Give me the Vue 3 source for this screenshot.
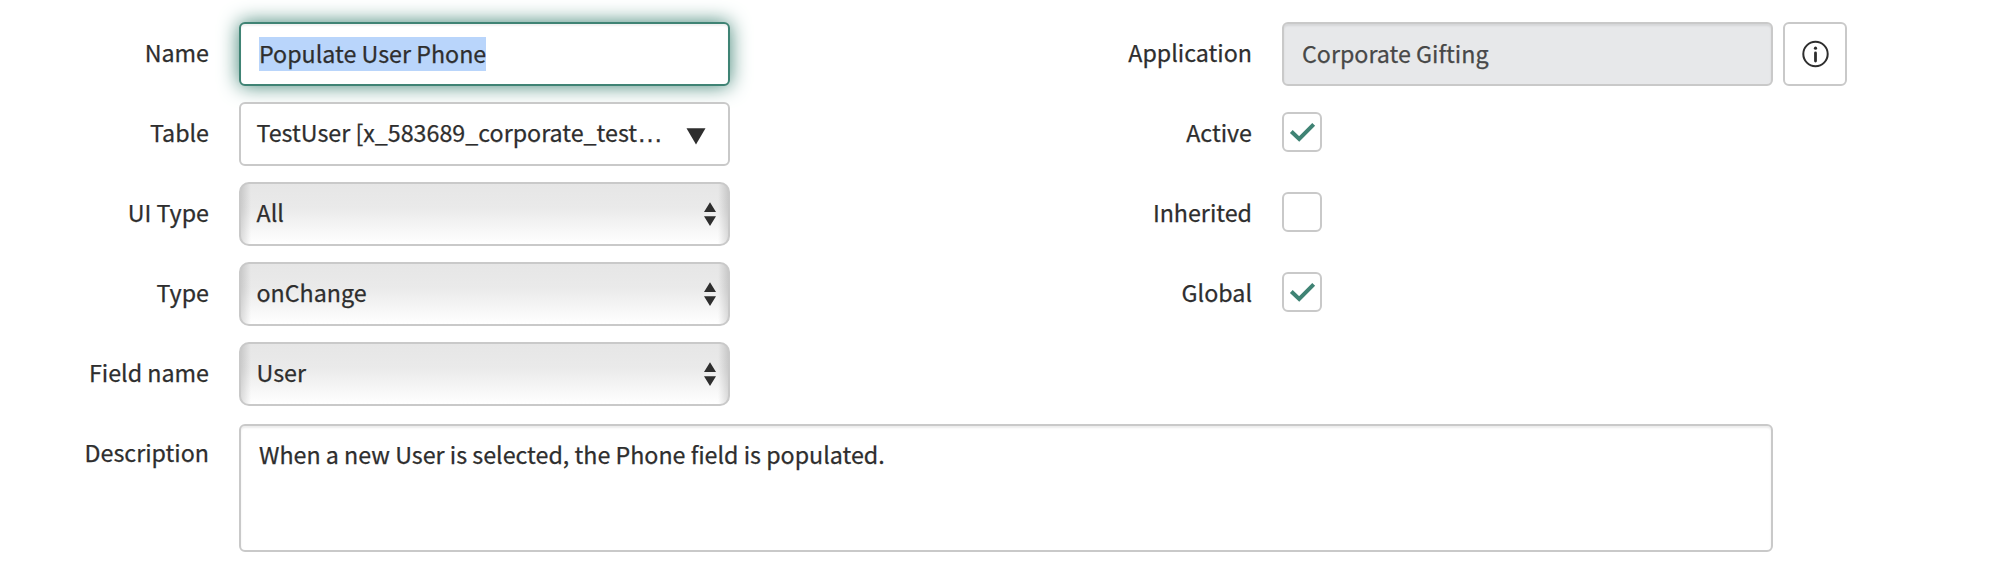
<script setup>
const selects = [
  { label: 'UI Type', value: 'All' },
  { label: 'Type', value: 'onChange' },
  { label: 'Field name', value: 'User' },
]
const checks = [
  { label: 'Active', on: true },
  { label: 'Inherited', on: false },
  { label: 'Global', on: true },
]
</script>

<template>
  <main class="form">
    <div class="columns">
      <section class="column left">
        <div class="row">
          <label class="label">Name</label>
          <div class="control focused"><span class="selected">Populate User Phone</span></div>
        </div>
        <div class="row">
          <label class="label">Table</label>
          <div class="control picker">
            <span>TestUser [x_583689_corporate_test<span class="dots">…</span></span>
            <svg class="caret" width="20" height="17" viewBox="0 0 20 17"><path d="M0.5 0.3H19.5L10 16.6Z" fill="#2e2e2e" /></svg>
          </div>
        </div>
        <div v-for="s in selects" :key="s.label" class="row">
          <label class="label">{{ s.label }}</label>
          <div class="control select">
            <span>{{ s.value }}</span>
            <svg width="12" height="24" viewBox="0 0 12 24"><path d="M0 10L6 0.3L12 10ZM0 14.2H12L6 24Z" fill="#2e2e2e" /></svg>
          </div>
        </div>
      </section>
      <section class="column right">
        <div class="row">
          <label class="label">Application</label>
          <div class="control readonly"><span>Corporate Gifting</span></div>
          <button class="info" type="button" aria-label="Information">
            <svg width="28" height="28" viewBox="0 0 28 28">
              <circle cx="14.5" cy="14" r="12.2" fill="none" stroke="#2e2e2e" stroke-width="2" />
              <circle cx="14.5" cy="8.2" r="1.6" fill="#2e2e2e" />
              <path d="M14.5 13V21" stroke="#2e2e2e" stroke-width="2.8" stroke-linecap="round" />
            </svg>
          </button>
        </div>
        <div v-for="c in checks" :key="c.label" class="row">
          <label class="label">{{ c.label }}</label>
          <div class="check">
            <svg v-if="c.on" width="36" height="36" viewBox="2 2 36 36"><path d="M9.3 19.5L17.2 27L31.7 12.3" fill="none" stroke="#3f8374" stroke-width="4" /></svg>
          </div>
        </div>
      </section>
    </div>
    <div class="row description">
      <label class="label">Description</label>
      <div class="control area">When a new User is selected, the Phone field is populated.</div>
    </div>
  </main>
</template>

<style>
body { margin: 0; background: #fff; }
</style>

<style scoped>
.form {
  box-sizing: border-box;
  width: 1998px;
  height: 566px;
  padding-top: 22px;
  font-family: "Noto Sans CJK SC", "Noto Sans", sans-serif;
  font-size: 23.25px;
  color: #2e2e2e;
  -webkit-text-stroke: 0.25px currentColor;
  overflow: hidden;
}
.columns { display: flex; }
.column { display: flex; flex-direction: column; gap: 16px; }
.left { width: 730px; }
.row { display: flex; height: 64px; }
.label {
  box-sizing: border-box;
  width: 239px;
  padding-right: 30px;
  text-align: right;
  line-height: 60px;
  white-space: nowrap;
  flex: none;
}
.right .label { width: 552px; }
.control {
  box-sizing: border-box;
  display: flex;
  width: 491px;
  height: 64px;
  border: 2px solid #c9c9c9;
  border-radius: 6px;
  background: #fff;
  line-height: 56px;
  white-space: nowrap;
  flex: none;
}
.focused {
  align-items: flex-start;
  padding: 13px 0 0 18px;
  border-color: #3f8374;
  box-shadow: inset 0 2px 2px rgba(0, 0, 0, 0.06), 0 0 20px rgba(63, 131, 116, 0.98);
}
.selected { height: 34px; line-height: 32px; background: #b9d5fb; }
.picker { justify-content: space-between; padding: 0 22px 0 15.5px; }
.dots { font-family: "Liberation Sans", sans-serif; font-size: 26px; line-height: 1; }
.caret { margin-top: 24px; }
.select {
  justify-content: space-between;
  padding: 0 12px 0 15.5px;
  border-radius: 10px;
  background:
    linear-gradient(to right, rgba(0, 0, 0, 0.13), rgba(0, 0, 0, 0) 10px, rgba(0, 0, 0, 0) calc(100% - 10px), rgba(0, 0, 0, 0.13)),
    linear-gradient(#e6e6e6, #eaeaea 40%, #fff);
}
.select svg { margin-top: 18px; }
.readonly {
  padding-left: 18px;
  background: #e7e8ea;
  color: #484848;
  line-height: 58px;
  box-shadow: inset 0 2px 2px rgba(0, 0, 0, 0.08);
}
.info {
  box-sizing: border-box;
  display: grid;
  place-items: center;
  width: 64px;
  height: 64px;
  margin-left: 10px;
  padding: 0;
  border: 2px solid #c9c9c9;
  border-radius: 6px;
  background: #fff;
}
.check {
  box-sizing: border-box;
  width: 40px;
  height: 40px;
  margin-top: 10px;
  border: 2px solid #c9c9c9;
  border-radius: 6px;
}
.check svg { display: block; }
.description { height: 128px; margin-top: 18px; }
.description .label { line-height: 56px; }
.area {
  display: block;
  width: 1534px;
  height: 128px;
  padding: 0 18px;
  box-shadow: inset 0 2px 2px rgba(0, 0, 0, 0.08);
}
</style>
